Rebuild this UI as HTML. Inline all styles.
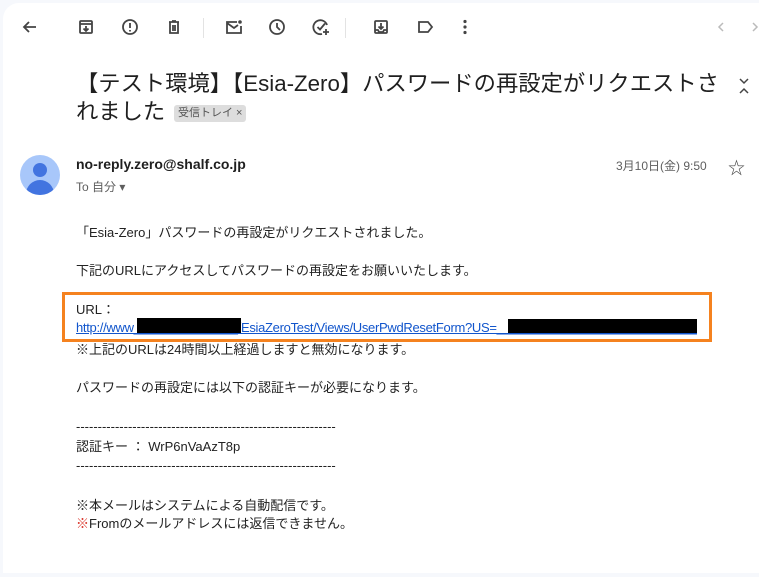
<!DOCTYPE html>
<html><head><meta charset="utf-8"><style>
body{margin:0;width:759px;height:577px;background:#f6f8fc;position:relative;overflow:hidden;font-family:"Liberation Sans","Noto Sans CJK JP",sans-serif;color:#222}
.card{position:absolute;left:3px;top:3px;width:770px;height:570px;background:#fff;border-radius:16px 0 0 0}
.a{position:absolute;white-space:nowrap}
svg.i{position:absolute;width:20px;height:20px;fill:none;stroke:#444;stroke-width:1.8}
.t{font-size:13px;line-height:18px}
.sep{position:absolute;top:18px;width:1px;height:20px;background:#e3e3e3}
</style></head><body>
<div class="card"></div>
<svg class="i" style="left:20px;top:17px" viewBox="0 0 20 20"><path d="M16 10H4M9 5L4 10l5 5"/></svg>
<svg class="i" style="left:76px;top:17px" viewBox="0 0 20 20"><rect x="4" y="4" width="12" height="12" rx="1"/><path d="M4 7h12M10 9v5M7.5 11.5L10 14l2.5-2.5"/></svg>
<svg class="i" style="left:120px;top:17px" viewBox="0 0 20 20"><circle cx="10" cy="10" r="7"/><path d="M10 6v5M10 13v1.5"/></svg>
<svg class="i" style="left:164px;top:17px" viewBox="0 0 20 20"><path d="M5 5h10M8 4h4M6 5v11h8V5M9 8v6M11 8v6"/></svg>
<div class="sep" style="left:203px"></div>
<svg class="i" style="left:224px;top:17px" viewBox="0 0 20 20"><path d="M13 5H3v11h14V9M3 6l7 5 4-3"/><circle cx="16" cy="5" r="1.8" fill="#444" stroke="none"/></svg>
<svg class="i" style="left:267px;top:17px" viewBox="0 0 20 20"><circle cx="10" cy="10" r="7"/><path d="M10 6v4l3 3"/></svg>
<svg class="i" style="left:311px;top:17px" viewBox="0 0 20 20"><path d="M16 8a7 7 0 1 0-5 9M6.5 10l2.5 2.5 5-6M15 12v6M12 15h6"/></svg>
<div class="sep" style="left:345px"></div>
<svg class="i" style="left:371px;top:17px" viewBox="0 0 20 20"><rect x="4" y="4" width="12" height="12" rx="1"/><path d="M10 6v6M7.5 9.5L10 12l2.5-2.5M4 13h3l1 2h4l1-2h3"/></svg>
<svg class="i" style="left:415px;top:17px" viewBox="0 0 20 20"><path d="M4 5h9l4 5-4 5H4z"/></svg>
<svg class="i" style="left:455px;top:17px;stroke:none;fill:#444" viewBox="0 0 20 20"><circle cx="10" cy="4.5" r="1.6"/><circle cx="10" cy="10" r="1.6"/><circle cx="10" cy="15.5" r="1.6"/></svg>
<svg class="i" style="left:711px;top:17px;stroke:#bbb;stroke-width:1.5" viewBox="0 0 20 20"><path d="M12 6l-4 4 4 4"/></svg>
<svg class="i" style="left:745px;top:17px;stroke:#bbb;stroke-width:1.5" viewBox="0 0 20 20"><path d="M8 6l4 4-4 4"/></svg>
<div class="a" style="left:76px;top:70px;font-size:22.3px;line-height:28px;color:#1f1f1f">【テスト環境】【Esia-Zero】パスワードの再設定がリクエストさ</div>
<div class="a" style="left:76px;top:98px;font-size:22.3px;line-height:28px;color:#1f1f1f">れました</div>
<div class="a" style="left:174px;top:105px;height:17px;padding:0 4px;background:#ddd;border-radius:3px;font-size:11px;line-height:17px;color:#555">受信トレイ ×</div>
<svg class="i" style="left:734px;top:76px;stroke-width:1.5" viewBox="0 0 20 20"><path d="M6 3l4 4 4-4M6 17l4-4 4 4"/></svg>
<div class="a" style="left:20px;top:155px;width:40px;height:40px;border-radius:50%;background:#a8c7fa;overflow:hidden"><div style="position:absolute;left:13px;top:8px;width:14px;height:14px;border-radius:50%;background:#4274e0"></div><div style="position:absolute;left:6px;top:25px;width:28px;height:20px;border-radius:14px 14px 0 0;background:#4274e0"></div></div>
<div class="a" style="left:76px;top:156px;font-size:14px;font-weight:bold;color:#1f1f1f">no-reply.zero@shalf.co.jp</div>
<div class="a" style="left:76px;top:178px;font-size:12px;color:#5e5e5e">To 自分 ▾</div>
<div class="a" style="left:616px;top:157px;font-size:12px;color:#5e5e5e">3月10日(金) 9:50</div>
<div class="a" style="left:728px;top:154px;font-size:17px;color:#444">☆</div>
<div class="a t" style="left:76px;top:224px">「Esia-Zero」パスワードの再設定がリクエストされました。</div>
<div class="a t" style="left:76px;top:262px">下記のURLにアクセスしてパスワードの再設定をお願いいたします。</div>
<div class="a" style="left:62px;top:292px;width:644px;height:44px;border:3px solid #f5821f"></div>
<div class="a t" style="left:76px;top:301px">URL：</div>
<div class="a t" style="left:76px;top:319px;width:621px;overflow:hidden;color:#1155cc;text-decoration:underline;letter-spacing:-0.3px">http://www_______________/EsiaZeroTest/Views/UserPwdResetForm?US=________________________________________</div>
<div class="a" style="left:137px;top:318px;width:104px;height:15px;background:#000"></div>
<div class="a" style="left:508px;top:319px;width:189px;height:14px;background:#000"></div>
<div class="a t" style="left:76px;top:341px">※上記のURLは24時間以上経過しますと無効になります。</div>
<div class="a t" style="left:76px;top:379px">パスワードの再設定には以下の認証キーが必要になります。</div>
<div class="a t" style="left:76px;top:418px;width:260px;overflow:hidden">----------------------------------------------------------------------</div>
<div class="a t" style="left:76px;top:438px">認証キー ： WrP6nVaAzT8p</div>
<div class="a t" style="left:76px;top:457px;width:260px;overflow:hidden">----------------------------------------------------------------------</div>
<div class="a t" style="left:76px;top:497px">※本メールはシステムによる自動配信です。</div>
<div class="a t" style="left:76px;top:515px"><span style="color:#d93025">※</span>Fromのメールアドレスには返信できません。</div>
</body></html>
